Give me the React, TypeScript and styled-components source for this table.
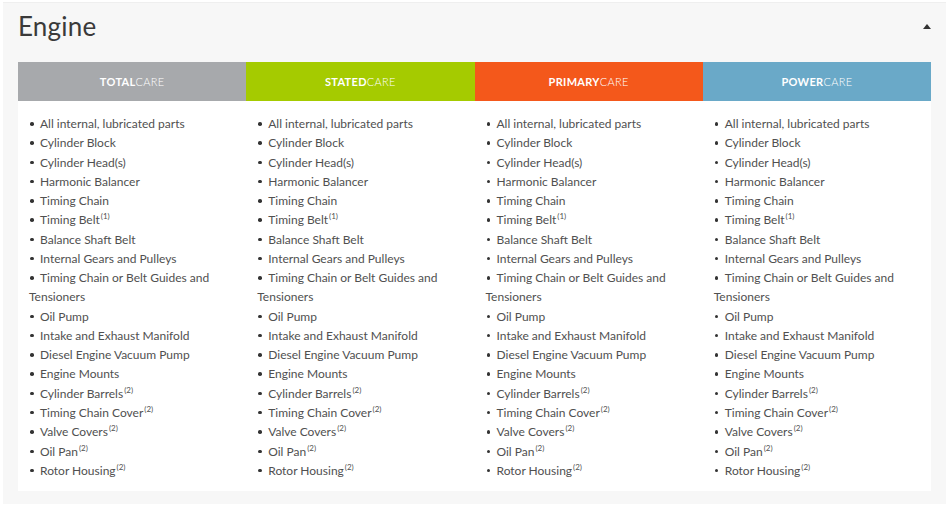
import React from "react";
import styled, { createGlobalStyle } from "styled-components";

const Global = createGlobalStyle`
  html, body { margin: 0; padding: 0; background: #ffffff; }
  body { font-family: Lato, "Open Sans", sans-serif; }
`;

const Panel = styled.section`
  margin: 2px 4px 0 3px;
  background: #f7f7f7;
  border-top: 1px solid #efefef;
  padding: 0 15px 12px 15px;
  height: 502px;
  box-sizing: border-box;
`;

const Header = styled.div`
  display: flex;
  align-items: center;
  justify-content: space-between;
  height: 46px;
  margin-bottom: 13px;
`;

const Title = styled.h2`
  margin: 0;
  font-family: Lato, sans-serif;
  font-weight: 400;
  font-size: 26px;
  color: #3a3a3a;
  letter-spacing: 0.2px;
`;

const Caret = styled.span`
  width: 0;
  height: 0;
  border-left: 4.5px solid transparent;
  border-right: 4.5px solid transparent;
  border-bottom: 5px solid #333;
`;

const Grid = styled.div`
  display: grid;
  grid-template-columns: repeat(4, 1fr);
  background: #ffffff;
`;

const PlanHead = styled.div<{ $bg: string }>`
  background: ${(p) => p.$bg};
  height: 39px;
  display: flex;
  align-items: center;
  justify-content: center;
  color: #ffffff;
  font-size: 11px;
  letter-spacing: 0.3px;
  b { font-weight: 700; }
  span { font-weight: 300; }
`;

const Items = styled.ul`
  list-style: none;
  margin: 0;
  padding: 13px 10px 11px 11px;
  font-size: 12px;
  line-height: 19.27px;
  color: #505050;
`;

const Item = styled.li`
  &::before {
    content: "";
    display: inline-block;
    width: 3.5px;
    height: 3.5px;
    border-radius: 50%;
    background: #333;
    margin: 0 6.5px 0 1px;
    vertical-align: 2.5px;
  }
  sup {
    font-size: 8px;
    line-height: 0;
    vertical-align: 5px;
    margin-left: 1px;
  }
`;

const plans = [
  { bold: "TOTAL", bg: "#a7a9ac" },
  { bold: "STATED", bg: "#a5cb00" },
  { bold: "PRIMARY", bg: "#f4581b" },
  { bold: "POWER", bg: "#6aa9c8" },
];

const parts: [string, string?][] = [
  ["All internal, lubricated parts"],
  ["Cylinder Block"],
  ["Cylinder Head(s)"],
  ["Harmonic Balancer"],
  ["Timing Chain"],
  ["Timing Belt", "(1)"],
  ["Balance Shaft Belt"],
  ["Internal Gears and Pulleys"],
  ["Timing Chain or Belt Guides and Tensioners"],
  ["Oil Pump"],
  ["Intake and Exhaust Manifold"],
  ["Diesel Engine Vacuum Pump"],
  ["Engine Mounts"],
  ["Cylinder Barrels", "(2)"],
  ["Timing Chain Cover", "(2)"],
  ["Valve Covers", "(2)"],
  ["Oil Pan", "(2)"],
  ["Rotor Housing", "(2)"],
];

export default function App() {
  return (
    <>
      <Global />
      <Panel>
        <Header>
          <Title>Engine</Title>
          <Caret />
        </Header>
        <Grid>
          {plans.map((p) => (
            <PlanHead key={p.bold} $bg={p.bg}>
              <b>{p.bold}</b>
              <span>CARE</span>
            </PlanHead>
          ))}
          {plans.map((p) => (
            <Items key={p.bold + "-list"}>
              {parts.map(([t, s]) => (
                <Item key={t}>
                  {t}
                  {s && <sup>{s}</sup>}
                </Item>
              ))}
            </Items>
          ))}
        </Grid>
      </Panel>
    </>
  );
}
